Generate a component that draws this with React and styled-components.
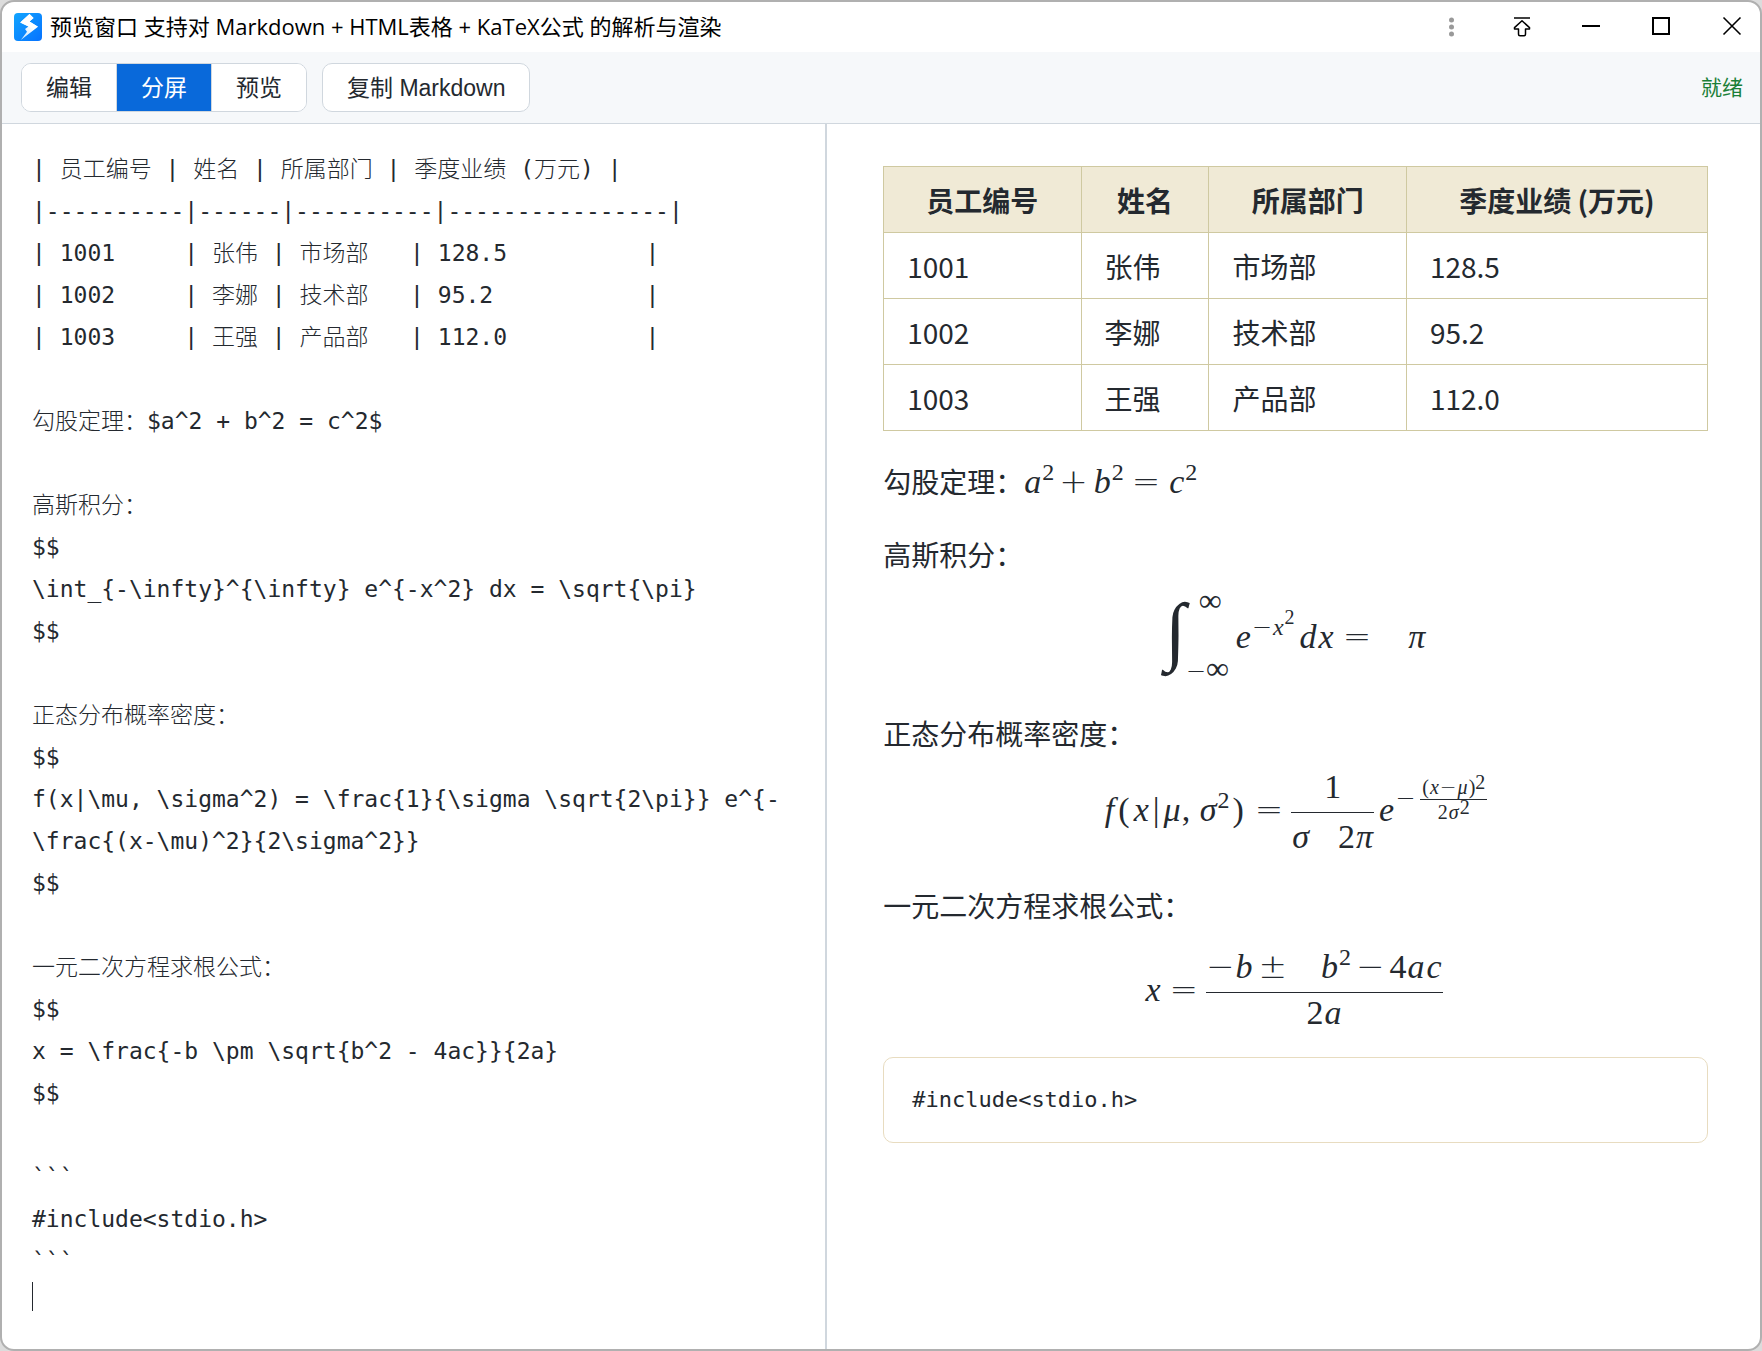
import { useState } from "react";
import styled, { createGlobalStyle } from "styled-components";

const SOURCE = String.raw`| 员工编号 | 姓名 | 所属部门 | 季度业绩 (万元) |
|----------|------|----------|----------------|
| 1001     | 张伟 | 市场部   | 128.5          |
| 1002     | 李娜 | 技术部   | 95.2           |
| 1003     | 王强 | 产品部   | 112.0          |

勾股定理：$a^2 + b^2 = c^2$

高斯积分：
$$
\int_{-\infty}^{\infty} e^{-x^2} dx = \sqrt{\pi}
$$

正态分布概率密度：
$$
f(x|\mu, \sigma^2) = \frac{1}{\sigma \sqrt{2\pi}} e^{-\frac{(x-\mu)^2}{2\sigma^2}}
$$

一元二次方程求根公式：
$$
x = \frac{-b \pm \sqrt{b^2 - 4ac}}{2a}
$$

~~~
#include<stdio.h>
~~~
`.replaceAll("~", "`");

const LINE_HEIGHT = 42;
const EDITOR_PADDING = 24;
const CARET_ROW = 27;

const MODES = ["编辑", "分屏", "预览"];

const COLUMNS = ["员工编号", "姓名", "所属部门", "季度业绩 (万元)"];

const EMPLOYEES = [
  ["1001", "张伟", "市场部", "128.5"],
  ["1002", "李娜", "技术部", "95.2"],
  ["1003", "王强", "产品部", "112.0"],
];

const Logo = () => (
  <svg width="28" height="28" viewBox="0 0 28 28" aria-hidden="true">
    <defs>
      <linearGradient id="logoBlue" x1="0" y1="0" x2="1" y2="1">
        <stop offset="0" stopColor="#12a5ff" />
        <stop offset="1" stopColor="#0672ff" />
      </linearGradient>
      <linearGradient id="logoBolt" x1="1" y1="0" x2="0" y2="1">
        <stop offset="0.4" stopColor="#ffffff" />
        <stop offset="1" stopColor="#b9e0ff" />
      </linearGradient>
    </defs>
    <rect width="28" height="28" rx="4" fill="url(#logoBlue)" />
    <path
      d="M15.5 1 L19.5 5 L15.5 8.5 L24 13.8 L6.8 27 L13 18.8 L11 16 L14.5 13.5 L6.2 9.6 Z"
      fill="url(#logoBolt)"
    />
    <path d="M15.5 1 L19.5 5 L15.5 8.5 L24 13.8 L17.5 15 L6.2 9.6 Z" fill="#fff" />
  </svg>
);

const MoreIcon = () => (
  <svg width="24" height="24" viewBox="0 0 24 24" fill="#999999">
    <circle cx="11.5" cy="5" r="2.5" />
    <circle cx="11.5" cy="12" r="2.5" />
    <circle cx="11.5" cy="19" r="2.5" />
  </svg>
);

const PinIcon = () => (
  <svg width="24" height="24" viewBox="0 0 24 24" fill="none" stroke="#000">
    <path d="M4 3H20" strokeWidth="1.4" />
    <path
      d="M12 5.8 L19.5 12.6 V13.9 H15.5 V19.2 Q15.5 20.7 14 20.7 H10 Q8.5 20.7 8.5 19.2 V13.9 H4.5 V12.6 Z"
      strokeWidth="1.5"
      strokeLinejoin="round"
    />
  </svg>
);

const MinimizeIcon = () => (
  <svg width="24" height="24" viewBox="0 0 24 24">
    <path d="M2 11H20" stroke="#000" strokeWidth="2" />
  </svg>
);

const MaximizeIcon = () => (
  <svg width="24" height="24" viewBox="0 0 24 24">
    <rect x="3" y="3" width="16" height="16" fill="none" stroke="#000" strokeWidth="2" />
  </svg>
);

const CloseIcon = () => (
  <svg width="24" height="24" viewBox="0 0 24 24">
    <path d="M3.5 2.5L20.5 19.5M20.5 2.5L3.5 19.5" stroke="#000" strokeWidth="1.6" />
  </svg>
);

const WINDOW_ACTIONS = [
  { label: "更多", Icon: MoreIcon },
  { label: "置顶", Icon: PinIcon },
  { label: "最小化", Icon: MinimizeIcon },
  { label: "最大化", Icon: MaximizeIcon },
  { label: "关闭", Icon: CloseIcon },
];

const Pythagoras = () => (
  <Formula>
    <i>a</i>
    <Sup>2</Sup>
    <Bin>+</Bin>
    <i>b</i>
    <Sup>2</Sup>
    <Rel>=</Rel>
    <i>c</i>
    <Sup>2</Sup>
  </Formula>
);

const GaussIntegral = () => (
  <Formula>
    <Integral>∫</Integral>
    <Limits>
      <UpperLimit>
        <Infinity>∞</Infinity>
      </UpperLimit>
      <span>
        <Op>−</Op>
        <Infinity>∞</Infinity>
      </span>
    </Limits>
    <i>e</i>
    <Sup>
      <Op>−</Op>
      <i>x</i>
    </Sup>
    <SupSup>2</SupSup>
    <i>d</i>
    <i>x</i>
    <Rel>=</Rel>
    <Radicand>
      <i>π</i>
    </Radicand>
  </Formula>
);

const NormalDensity = () => (
  <Formula>
    <i>f</i>
    <Delim>(</Delim>
    <i>x</i>
    <Delim>|</Delim>
    <i>μ</i>, <i>σ</i>
    <Sup>2</Sup>
    <Delim>)</Delim>
    <Rel>=</Rel>
    <Frac>
      <Numerator>1</Numerator>
      <Denominator>
        <i>σ</i>
        <Radicand $clearance={4}>
          2<i>π</i>
        </Radicand>
      </Denominator>
    </Frac>
    <i>e</i>
    <Sup $raise={15}>
      <Op>−</Op>
    </Sup>
    <SmallFrac>
      <SmallNumerator>
        (<i>x</i>
        <Op>−</Op>
        <i>μ</i>)<SmallSup>2</SmallSup>
      </SmallNumerator>
      <SmallDenominator>
        2<i>σ</i>
        <SmallSup>2</SmallSup>
      </SmallDenominator>
    </SmallFrac>
  </Formula>
);

const QuadraticRoots = () => (
  <Formula>
    <i>x</i>
    <Rel>=</Rel>
    <Frac>
      <Numerator>
        <Op>−</Op>
        <i>b</i>
        <Bin>±</Bin>
        <Radicand $clearance={7}>
          <i>b</i>
          <Sup>2</Sup>
          <Bin>−</Bin>4<i>a</i>
          <i>c</i>
        </Radicand>
      </Numerator>
      <Denominator>
        2<i>a</i>
      </Denominator>
    </Frac>
  </Formula>
);

const App = () => {
  const [source, setSource] = useState(SOURCE);
  const [mode, setMode] = useState("分屏");

  return (
    <>
      <GlobalStyle />
      <Window>
        <TitleBar>
          <Logo />
          <Title>预览窗口 支持对 Markdown + HTML表格 + KaTeX公式 的解析与渲染</Title>
          <WindowActions>
            {WINDOW_ACTIONS.map(({ label, Icon }) => (
              <WindowButton key={label} type="button" aria-label={label}>
                <Icon />
              </WindowButton>
            ))}
          </WindowActions>
        </TitleBar>

        <Toolbar>
          <ModeGroup>
            {MODES.map((name) => (
              <ModeButton
                key={name}
                type="button"
                $active={name === mode}
                aria-pressed={name === mode}
                onClick={() => setMode(name)}
              >
                {name}
              </ModeButton>
            ))}
          </ModeGroup>
          <CopyButton
            type="button"
            onClick={() => navigator.clipboard?.writeText(source)}
          >
            复制 Markdown
          </CopyButton>
          <Status>就绪</Status>
        </Toolbar>

        <Panes $split={mode === "分屏"}>
          {mode !== "预览" && (
            <EditorPane>
              <Editor
                aria-label="Markdown"
                spellCheck={false}
                value={source}
                onChange={(e) => setSource(e.target.value)}
              />
              <Caret style={{ top: EDITOR_PADDING + CARET_ROW * LINE_HEIGHT }} />
            </EditorPane>
          )}
          {mode !== "编辑" && (
            <Preview>
              <Table>
                <thead>
                  <tr>
                    {COLUMNS.map((name) => (
                      <HeadCell key={name}>{name}</HeadCell>
                    ))}
                  </tr>
                </thead>
                <tbody>
                  {EMPLOYEES.map((row) => (
                    <tr key={row[0]}>
                      {row.map((value) => (
                        <Cell key={value}>{value}</Cell>
                      ))}
                    </tr>
                  ))}
                </tbody>
              </Table>
              <Paragraph>
                勾股定理：
                <Pythagoras />
              </Paragraph>
              <Paragraph>高斯积分：</Paragraph>
              <Display>
                <GaussIntegral />
              </Display>
              <Paragraph>正态分布概率密度：</Paragraph>
              <Display>
                <NormalDensity />
              </Display>
              <Paragraph>一元二次方程求根公式：</Paragraph>
              <Display>
                <QuadraticRoots />
              </Display>
              <CodeBlock>
                <code>{"#include<stdio.h>"}</code>
              </CodeBlock>
            </Preview>
          )}
        </Panes>
      </Window>
    </>
  );
};

const GlobalStyle = createGlobalStyle`
  * {
    box-sizing: border-box;
  }

  body {
    margin: 0;
    background: #dcdcdc;
    color: #24292f;
    font-family: "Noto Sans CJK SC", sans-serif;
  }
`;

const Window = styled.div`
  display: flex;
  flex-direction: column;
  min-height: 100vh;
  border: 2px solid #b0b0b0;
  border-radius: 14px;
  background: #ffffff;
  overflow: hidden;
`;

const TitleBar = styled.header`
  display: flex;
  align-items: center;
  height: 50px;
  padding-left: 12px;
`;

const Title = styled.h1`
  flex: 1;
  margin: 0 0 2px 8px;
  color: #000000;
  font-family: "Open Sans", "Noto Sans CJK SC", sans-serif;
  font-size: 22px;
  font-weight: 400;
  line-height: 28px;
`;

const WindowActions = styled.div`
  display: flex;
  gap: 14px;
`;

const WindowButton = styled.button`
  display: flex;
  align-items: center;
  justify-content: center;
  width: 56px;
  height: 50px;
  padding: 0;
  border: 0;
  background: none;
`;

const Toolbar = styled.div`
  display: flex;
  align-items: center;
  gap: 15px;
  height: 72px;
  padding: 0 17px 0 19px;
  border-bottom: 1px solid #d0d7de;
  background: #f6f8fa;
`;

const ModeGroup = styled.div`
  display: flex;
  height: 49px;
  border: 1px solid #d0d7de;
  border-radius: 10px;
  background: #ffffff;
  overflow: hidden;
`;

const ToolButton = styled.button`
  padding: 0 24px;
  color: #24292f;
  font-family: "Liberation Sans", "Noto Sans CJK SC", sans-serif;
  font-size: 23px;
  line-height: 30px;
`;

const ModeButton = styled(ToolButton)`
  border: 0;
  border-right: 1px solid #d0d7de;
  background: ${(props) => (props.$active ? "#0969da" : "#ffffff")};
  color: ${(props) => (props.$active ? "#ffffff" : "#24292f")};

  &:last-child {
    border-right: 0;
  }
`;

const CopyButton = styled(ToolButton)`
  height: 49px;
  border: 1px solid #d0d7de;
  border-radius: 10px;
  background: #ffffff;
`;

const Status = styled.span`
  margin-left: auto;
  color: #1a7f37;
  font-family: "Liberation Sans", "Noto Sans CJK SC", sans-serif;
  font-size: 21px;
  line-height: 30px;
`;

const Panes = styled.main`
  display: grid;
  flex: 1;
  grid-template-columns: ${(props) => (props.$split ? "23fr 26fr" : "1fr")};
`;

const EditorPane = styled.section`
  position: relative;
  display: flex;
  border-right: 2px solid #d0d7de;
`;

const Editor = styled.textarea`
  flex: 1;
  min-width: 0;
  padding: ${EDITOR_PADDING}px 30px;
  border: 0;
  outline: 0;
  resize: none;
  background: none;
  color: #24292f;
  caret-color: transparent;
  font-family: "DejaVu Sans Mono", "Noto Sans CJK SC", monospace;
  font-size: 23px;
  font-weight: 300;
  line-height: ${LINE_HEIGHT}px;
`;

const Caret = styled.span`
  position: absolute;
  left: 30px;
  width: 1px;
  height: 29px;
  background: #24292f;
`;

const Preview = styled.article`
  min-width: 0;
  padding: 42px 52px 42px 56px;
  font-size: 28px;
`;

const Table = styled.table`
  width: 100%;
  border-collapse: collapse;
  margin-bottom: 26px;
`;

const Cell = styled.td`
  height: 66px;
  padding: 0 23px;
  border: 1px solid #cfc9a1;
  line-height: 48px;
`;

const HeadCell = styled(Cell).attrs({ as: "th" })`
  background: #f0ead6;
  font-weight: 700;
  text-align: center;
`;

const Paragraph = styled.p`
  margin: 25px 0 0;
  line-height: 48px;
`;

const Display = styled.div`
  margin: 12px 0 26px;
  text-align: center;
`;

const CodeBlock = styled.pre`
  margin: 0;
  padding: 24px 28px;
  border: 1px solid #e8dcc0;
  border-radius: 10px;
  font-family: "DejaVu Sans Mono", monospace;
  font-size: 22px;
  line-height: 36px;

  code {
    font-family: inherit;
  }
`;

const Formula = styled.span`
  font-family: "Liberation Serif", serif;
  font-size: 34px;
  line-height: 36px;
  white-space: nowrap;

  i {
    padding: 0 1px;
  }
`;

const Op = styled.span`
  font-family: "DejaVu Sans Light", "DejaVu Sans", sans-serif;
  font-weight: 200;
`;

const Bin = styled(Op)`
  margin: 0 5px;
`;

const Rel = styled(Op)`
  margin: 0 8px;
`;

const Delim = styled.span`
  margin: 0 3px;
`;

const Sup = styled.span`
  font-size: 24px;
  line-height: 0;
  vertical-align: ${(props) => props.$raise ?? 13}px;
`;

const SupSup = styled.span`
  margin-right: 4px;
  font-size: 20px;
  line-height: 0;
  vertical-align: 24px;
`;

const SmallSup = styled.span`
  line-height: 0;
  vertical-align: 5px;
`;

const Integral = styled.span`
  font-size: 76px;
  font-style: italic;
  line-height: 80px;
  vertical-align: -8px;
`;

const Limits = styled.span`
  display: inline-flex;
  flex-direction: column;
  gap: 44px;
  margin-right: 6px;
  font-size: 24px;
  line-height: 24px;
  text-align: left;
  vertical-align: 37px;
`;

const UpperLimit = styled.span`
  padding-left: 13px;
`;

const Infinity = styled.span`
  font-size: 32px;
  line-height: 0;
`;

const Radicand = styled.span`
  display: inline-block;
  padding: ${(props) => props.$clearance ?? 0}px 0 0 28px;
`;

const Frac = styled.span`
  display: inline-flex;
  flex-direction: column;
  margin-right: 4px;
  text-align: center;
  vertical-align: 23px;
`;

const Numerator = styled.span`
  padding-bottom: 7px;
`;

const Denominator = styled.span`
  padding-top: 2px;
  border-top: 1px solid #24292f;
`;

const SmallFrac = styled(Frac)`
  margin: 0 0 0 5px;
  font-size: 20px;
  line-height: 20px;
  vertical-align: 27px;
`;

const SmallNumerator = styled.span`
  padding: 0 2px 2px;
`;

const SmallDenominator = styled.span`
  padding-top: 2px;
  border-top: 1px solid #24292f;
`;

export default App;
